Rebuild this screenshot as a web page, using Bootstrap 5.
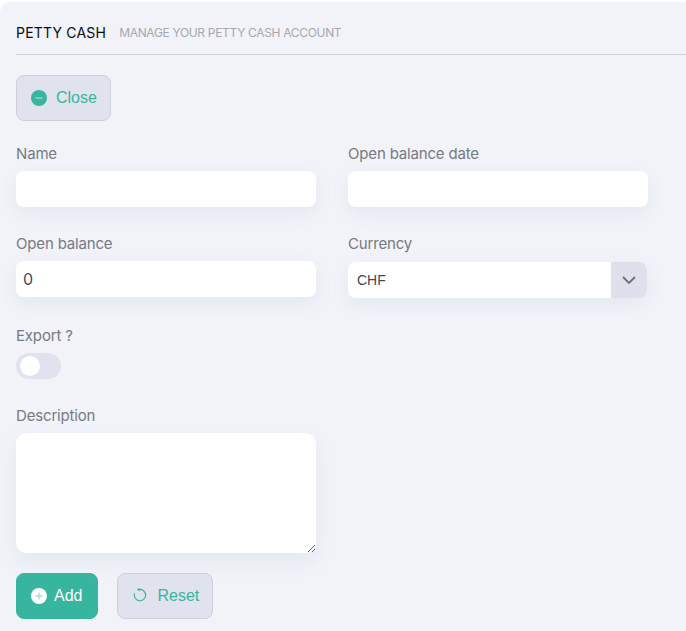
<!DOCTYPE html>
<html lang="en"><head><meta charset="utf-8"><title>Petty cash</title>
<link href="https://cdn.jsdelivr.net/npm/bootstrap@5.3.0/dist/css/bootstrap.min.css" rel="stylesheet">
<style>
html,body{height:100%;overflow:hidden;background:#fff}
body{font-family:Inter,"Liberation Sans",sans-serif}
.panel{margin-top:2px;height:629px;background:#f1f3f9;border-top-left-radius:10px;padding-left:16px;overflow:hidden}
.head{height:53px;border-bottom:1px solid #cfd1de;padding-bottom:12px}
.ttl{font-size:14px;color:#0b0b14;letter-spacing:.2px;line-height:18px;font-weight:400}
.sub{font-size:12px;color:#a7a7ad;letter-spacing:-.32px;margin-left:13px;line-height:18px}
.bt{height:46px;border-radius:8px;font:16px "Liberation Sans",sans-serif;padding:0 13px 0 14px;display:inline-flex;align-items:center}
.bt-soft{background:#e0e2ed;border:1px solid #cdcfdf;color:#37b59e}
.bt-main{background:#37b59e;border:1px solid #37b59e;color:#fff;font-weight:400;padding-right:15px}
.bt-reset{padding-left:15px}
.bt svg{flex:none}
.gap-close{margin-right:9px}
.gap-txt{margin-right:7px}
.gap-reset{margin-right:8px}
.close-row{margin-top:20px}
.fields{width:632px;display:grid;grid-template-columns:300px 300px;column-gap:32px}
.lbl{display:block;font-size:15px;line-height:18px;color:#777a83;letter-spacing:-.17px;margin:0 0 8px}
.lbl-sel{margin-bottom:9px}
.inp{height:36px;width:300px;background:#fff;border:0;border-radius:8px;box-shadow:0 6px 18px rgba(120,125,160,.09);padding:0 7px;font:16px Inter,sans-serif;color:#4a4a55;outline:0;display:block}
.f1{margin-top:24px}.f2{margin-top:28px}
.f3{grid-column:1/3;margin-top:29px}.f4{grid-column:1/3;margin-top:28px}
.sel-wrap{height:36px;width:299px;background:#fff;border-radius:8px;box-shadow:0 6px 18px rgba(120,125,160,.09);overflow:hidden;display:flex;align-items:stretch}
.sel-val{flex:1;padding:0 9px;font:14px/36px "Liberation Sans",sans-serif;color:#45454f}
.sel-btn{width:36px;background:#dfe0eb;display:flex;align-items:center;justify-content:center}
.tog{width:45px;height:26px;border-radius:13px;background:#e0e2ed;padding:3px 4px}
.knob{width:20px;height:20px;border-radius:50%;background:#fff}
.area{display:block;width:300px;height:120px;background:#fff;border:0;border-radius:10px;box-shadow:0 8px 20px rgba(120,125,160,.1);outline:0;padding:7px}
.acts{margin-top:20px;gap:19px}
</style></head><body>
<div class="panel">
 <div class="head d-flex align-items-end"><div class="d-flex align-items-center"><span class="ttl">PETTY CASH</span><span class="sub">MANAGE YOUR PETTY CASH ACCOUNT</span></div></div>
 <div class="close-row"><button type="button" class="btn bt bt-soft">
   <svg width="16" height="16" viewBox="0 0 16 16" class="gap-close"><circle cx="8" cy="8" r="8" fill="#37b59e"/><rect x="4.5" y="7.2" width="7" height="1.6" fill="#8cd3c5"/></svg>Close</button></div>
 <form class="fields">
  <div class="f1"><label class="lbl">Name</label><input class="inp" type="text"></div>
  <div class="f1"><label class="lbl">Open balance date</label><input class="inp" type="text"></div>
  <div class="f2"><label class="lbl">Open balance</label><input class="inp" type="text" value="0"></div>
  <div class="f2"><label class="lbl lbl-sel">Currency</label><div class="sel-wrap"><div class="sel-val">CHF</div><div class="sel-btn"><svg width="14" height="8" viewBox="0 0 14 8" fill="none"><path d="M1 1l6 6 6-6" stroke="#6c6e7c" stroke-width="1.8"/></svg></div></div></div>
  <div class="f3"><label class="lbl">Export ?</label><div class="tog"><div class="knob"></div></div></div>
  <div class="f4"><label class="lbl">Description</label><textarea class="area"></textarea></div>
 </form>
 <div class="acts d-flex">
  <button type="button" class="btn bt bt-main"><svg width="16" height="16" viewBox="0 0 16 16" class="gap-txt"><circle cx="8" cy="8" r="8" fill="#fff"/><path d="M8 4.5v7M4.5 8h7" stroke="#a5dfd3" stroke-width="1.3"/></svg>Add</button>
  <button type="button" class="btn bt bt-soft bt-reset"><svg width="16" height="16" viewBox="0 0 16 16" fill="none" class="gap-reset"><path d="M5.5 1.6A5.7 5.7 0 1 1 1.5 5.5" stroke="#37b59e" stroke-width="1.2"/><path d="M6.6 0v3.6L3.6 1.6z" fill="#37b59e"/></svg>Reset</button>
 </div>
</div>
</body></html>
